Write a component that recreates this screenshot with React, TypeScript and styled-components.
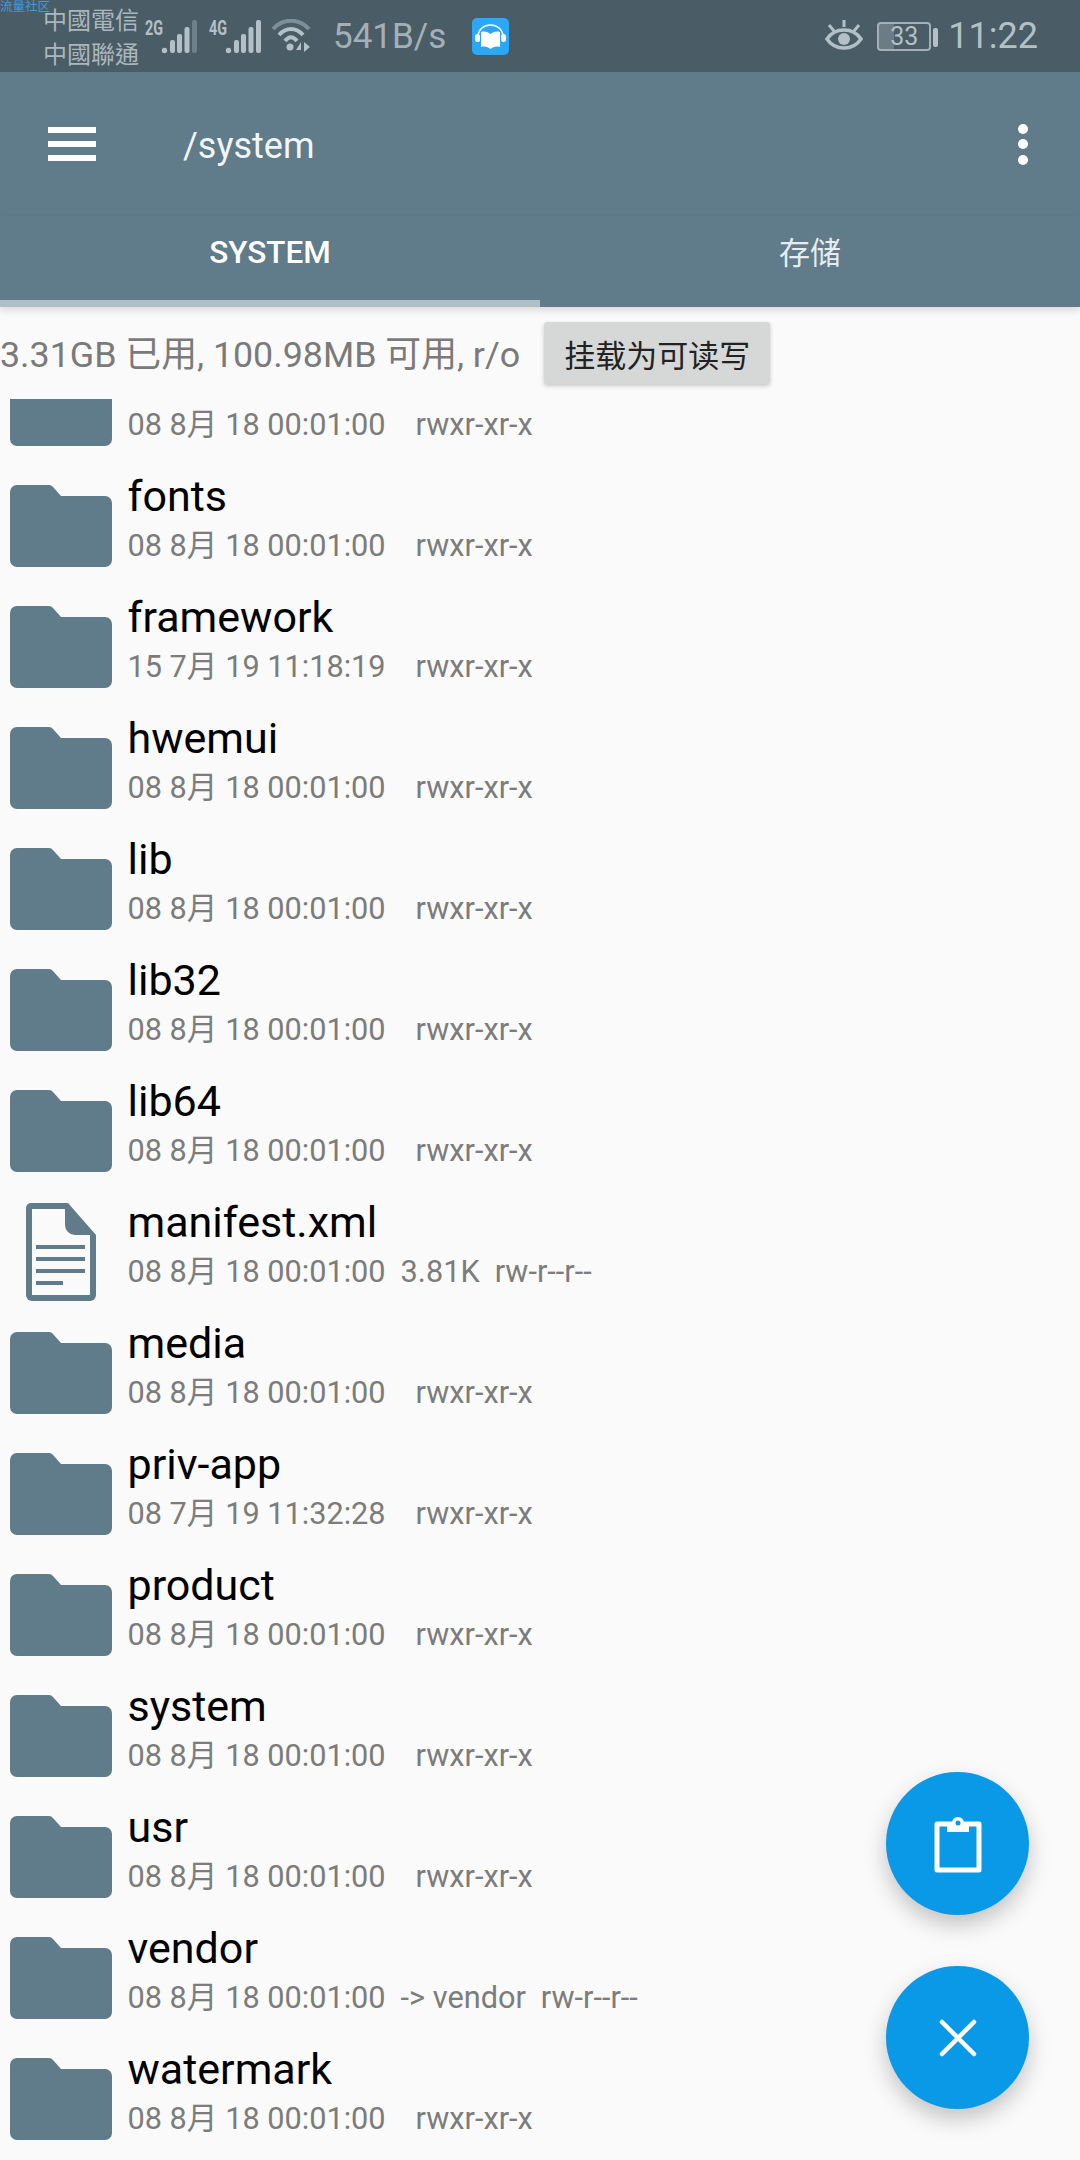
import React from "react";
import styled, { createGlobalStyle } from "styled-components";

const GlobalStyle = createGlobalStyle`
  html, body {
    margin: 0;
    padding: 0;
    background: #fafafa;
  }
  * {
    box-sizing: border-box;
  }
`;

const FONT = `Roboto, "Noto Sans CJK SC", sans-serif`;

const Screen = styled.div`
  position: relative;
  width: 1080px;
  height: 2160px;
  display: flex;
  flex-direction: column;
  overflow: hidden;
  background: #fafafa;
  font-family: ${FONT};
`;

const StatusBar = styled.div`
  position: relative;
  height: 72px;
  flex: none;
  display: flex;
  align-items: center;
  padding: 0 42px 0 43px;
  background: #4a5c66;
  color: #b4c0c7;
`;

const Watermark = styled.span`
  position: absolute;
  left: 0;
  top: 0;
  font-size: 12.5px;
  line-height: 14px;
  color: #3d9be0;
`;

const Carrier = styled.div`
  width: 100px;
  font-family: "Noto Sans CJK TC", sans-serif;
  font-size: 24px;
  line-height: 34px;
  color: #aab7be;
`;

const SignalBox = styled.svg`
  display: block;
  flex: none;
  margin-left: ${(props: { $gap: number }) => props.$gap}px;
`;

const Speed = styled.span`
  margin-left: 22px;
  font-size: 35px;
  color: #a3b0b8;
`;

const AppBadge = styled.svg`
  display: block;
  margin-left: 26px;
`;

const Spacer = styled.div`
  flex: 1;
`;

const BatteryBox = styled.div`
  position: relative;
  width: 54px;
  height: 29px;
  margin-left: 14px;
  border: 2px solid #a3b0b8;
  border-radius: 4px;
  display: flex;
  align-items: center;
  justify-content: center;
  font-size: 25px;
  color: #b4c0c7;
  background: linear-gradient(to right, #6c7c85 0 30%, transparent 30%);

  &::after {
    content: "";
    position: absolute;
    right: -9px;
    top: 4px;
    width: 5px;
    height: 19px;
    border-radius: 2px;
    background: #b4c0c7;
  }
`;

const Clock = styled.span`
  margin-left: 17px;
  font-size: 36px;
  color: #b4c0c7;
`;

const Toolbar = styled.div`
  height: 144px;
  flex: none;
  display: flex;
  align-items: center;
  padding: 0 0 0 48px;
  background: #607b8a;
  color: #fff;
`;

const MenuBars = styled.div`
  width: 48px;
  display: flex;
  flex-direction: column;
  gap: 8px;

  span {
    display: block;
    height: 6px;
    background: #fff;
  }
`;

const Path = styled.span`
  margin-left: 87px;
  padding-top: 3px;
  flex: 1;
  font-size: 36px;
  color: #f2f5f6;
`;

const MoreDots = styled.div`
  width: 10px;
  margin-right: 52px;
  display: flex;
  flex-direction: column;
  gap: 5.5px;

  span {
    display: block;
    width: 10px;
    height: 10px;
    border-radius: 50%;
    background: #fff;
  }
`;

const Tabs = styled.div`
  position: relative;
  z-index: 1;
  height: 91px;
  flex: none;
  display: flex;
  background: #607b8a;
  box-shadow: 0 3px 8px rgba(0, 0, 0, 0.14);
`;

const Tab = styled.div<{ $active?: boolean }>`
  flex: 1;
  display: flex;
  align-items: center;
  justify-content: center;
  padding-bottom: ${(props) => (props.$active ? 12 : 15)}px;
  font-size: ${(props) => (props.$active ? 31.5 : 31)}px;
  font-weight: ${(props) => (props.$active ? 500 : 400)};
  color: ${(props) => (props.$active ? "#fff" : "#e6ecef")};
  border-bottom: 7px solid ${(props) => (props.$active ? "#b0bec5" : "transparent")};
`;

const InfoRow = styled.div`
  height: 92px;
  flex: none;
  display: flex;
  align-items: flex-start;
  padding-top: 15px;
`;

const InfoText = styled.span`
  height: 62px;
  line-height: 66px;
  font-size: 35.8px;
  color: #7a7a7a;
  white-space: nowrap;
`;

const MountButton = styled.div`
  width: 226px;
  height: 62px;
  margin-left: 24px;
  display: flex;
  align-items: center;
  justify-content: center;
  border-radius: 3px;
  background: #d6d7d7;
  box-shadow: 0 2px 4px rgba(0, 0, 0, 0.2);
  font-size: 31px;
  color: #222;
`;

const List = styled.div`
  flex: 1;
  overflow: hidden;
`;

const ScrolledContent = styled.div`
  margin-top: -55px;
`;

const Row = styled.div`
  height: 121px;
  display: flex;
  padding-left: 10px;
`;

const IconSlot = styled.div`
  width: 102px;
  flex: none;
  padding-top: 1px;
  display: flex;
  align-items: center;
  justify-content: center;
`;

const Texts = styled.div`
  margin-left: 15.5px;
  padding-top: 6.5px;
  display: flex;
  flex-direction: column;
`;

const Name = styled.div`
  font-size: 43px;
  line-height: 48px;
  color: #000;
`;

const Meta = styled.div`
  margin-top: 6px;
  display: flex;
  font-size: 30.7px;
  line-height: 40px;
  color: #7c7c7c;
  white-space: nowrap;
`;

const Extra = styled.span`
  margin-left: 15px;
`;

const Perm = styled.span<{ $wide: boolean }>`
  margin-left: ${(props) => (props.$wide ? 30 : 15)}px;
`;

const Fab = styled.div<{ $top: number }>`
  position: absolute;
  left: 886px;
  top: ${(props) => props.$top}px;
  width: 143px;
  height: 143px;
  display: flex;
  align-items: center;
  justify-content: center;
  border-radius: 50%;
  background: #0a99e6;
  box-shadow: 0 10px 22px rgba(0, 0, 0, 0.22);
`;

const FolderIcon = () => (
  <svg width="102" height="82" viewBox="0 0 102 82">
    <path
      d="M7 0H39a5 5 0 0 1 4 2L51 11H95a7 7 0 0 1 7 7V75a7 7 0 0 1-7 7H7a7 7 0 0 1-7-7V7a7 7 0 0 1 7-7Z"
      fill="#607b8a"
    />
  </svg>
);

const FileIcon = () => (
  <svg width="70" height="98" viewBox="0 0 70 98">
    <path
      d="M5 0H42L70 32V92a6 6 0 0 1-6 6H6a6 6 0 0 1-6-6V5a5 5 0 0 1 5-5Z"
      fill="#607b8a"
    />
    <path d="M6 6H39V22a10 10 0 0 0 10 10H64V92H6Z" fill="#fafafa" />
    <path d="M10 44H59M10 56H59M10 68H59M10 80H37" stroke="#607b8a" strokeWidth="4" />
  </svg>
);

const Signal = ({ label, gap, lastDim }: { label: string; gap: number; lastDim?: boolean }) => (
  <SignalBox $gap={gap} width="53" height="38" viewBox="0 0 53 38">
    <text x="0" y="18" fontSize="21" fontWeight="700" fill="#b4c0c7" fontFamily="Roboto" textLength="18" lengthAdjust="spacingAndGlyphs">
      {label}
    </text>
    <circle cx="19.5" cy="33.5" r="2.7" fill="#b4c0c7" />
    <rect x="25" y="23" width="5" height="13" rx="2" fill="#b4c0c7" />
    <rect x="32" y="17" width="5" height="19" rx="2" fill="#b4c0c7" />
    <rect x="39.5" y="10" width="5" height="26" rx="2" fill="#b4c0c7" />
    <rect x="47" y="3" width="5" height="33" rx="2" fill={lastDim ? "#6f8089" : "#b4c0c7"} />
  </SignalBox>
);

const Wifi = () => (
  <SignalBox $gap={9} width="40" height="34" viewBox="0 0 40 34">
    <path d="M2 10C12 -1 28 -1 38 10" stroke="#7f8f98" strokeWidth="4" fill="none" />
    <path d="M8 16C15 8 25 8 32 16" stroke="#b4c0c7" strokeWidth="4" fill="none" />
    <path d="M14 22C18 17 22 17 26 22" stroke="#b4c0c7" strokeWidth="4" fill="none" />
    <circle cx="19" cy="28" r="3.5" fill="#b4c0c7" />
    <path d="M30 23L25 31H30ZM33 23L39 28L33 33Z" fill="#b4c0c7" />
  </SignalBox>
);

const Eye = () => (
  <svg width="38" height="32" viewBox="0 0 38 32">
    <path d="M2 19C10 7 28 7 36 19C28 31 10 31 2 19Z" fill="none" stroke="#b4c0c7" strokeWidth="3.5" />
    <circle cx="19" cy="19" r="6" fill="#b4c0c7" />
    <path d="M19 0V7M4 5L9 11M34 5L29 11" stroke="#b4c0c7" strokeWidth="3" />
  </svg>
);

const files = [
  { name: "", date: "08 8月 18 00:01:00", perm: "rwxr-xr-x" },
  { name: "fonts", date: "08 8月 18 00:01:00", perm: "rwxr-xr-x" },
  { name: "framework", date: "15 7月 19 11:18:19", perm: "rwxr-xr-x" },
  { name: "hwemui", date: "08 8月 18 00:01:00", perm: "rwxr-xr-x" },
  { name: "lib", date: "08 8月 18 00:01:00", perm: "rwxr-xr-x" },
  { name: "lib32", date: "08 8月 18 00:01:00", perm: "rwxr-xr-x" },
  { name: "lib64", date: "08 8月 18 00:01:00", perm: "rwxr-xr-x" },
  { name: "manifest.xml", date: "08 8月 18 00:01:00", extra: "3.81K", perm: "rw-r--r--", file: true },
  { name: "media", date: "08 8月 18 00:01:00", perm: "rwxr-xr-x" },
  { name: "priv-app", date: "08 7月 19 11:32:28", perm: "rwxr-xr-x" },
  { name: "product", date: "08 8月 18 00:01:00", perm: "rwxr-xr-x" },
  { name: "system", date: "08 8月 18 00:01:00", perm: "rwxr-xr-x" },
  { name: "usr", date: "08 8月 18 00:01:00", perm: "rwxr-xr-x" },
  { name: "vendor", date: "08 8月 18 00:01:00", extra: "-> vendor", perm: "rw-r--r--" },
  { name: "watermark", date: "08 8月 18 00:01:00", perm: "rwxr-xr-x" },
];

export default function App() {
  return (
    <Screen>
      <GlobalStyle />
      <StatusBar>
        <Watermark>流量社区</Watermark>
        <Carrier>
          中國電信
          <br />
          中國聯通
        </Carrier>
        <Signal label="2G" gap={2} lastDim />
        <Signal label="4G" gap={11} />
        <Wifi />
        <Speed>541B/s</Speed>
        <AppBadge width="37" height="37" viewBox="0 0 37 37">
          <rect width="37" height="37" rx="5" fill="#2aa8f5" />
          <path d="M6 19C6 3 31 3 31 19" stroke="#fff" strokeWidth="1.5" fill="none" />
          <rect x="3" y="16" width="5" height="8" rx="2.5" fill="#fff" />
          <rect x="29" y="16" width="5" height="8" rx="2.5" fill="#fff" />
          <path d="M9 14C13 13 16 14 18.5 16C21 14 24 13 28 14V29C24 28 21 29 18.5 31C16 29 13 28 9 29Z" fill="#fff" />
        </AppBadge>
        <Spacer />
        <Eye />
        <BatteryBox>33</BatteryBox>
        <Clock>11:22</Clock>
      </StatusBar>
      <Toolbar>
        <MenuBars>
          <span />
          <span />
          <span />
        </MenuBars>
        <Path>/system</Path>
        <MoreDots>
          <span />
          <span />
          <span />
        </MoreDots>
      </Toolbar>
      <Tabs>
        <Tab $active>SYSTEM</Tab>
        <Tab>存储</Tab>
      </Tabs>
      <InfoRow>
        <InfoText>3.31GB 已用, 100.98MB 可用, r/o</InfoText>
        <MountButton>挂载为可读写</MountButton>
      </InfoRow>
      <List>
        <ScrolledContent>
          {files.map((item) => (
            <Row key={item.name || "clipped"}>
              <IconSlot>{item.file ? <FileIcon /> : <FolderIcon />}</IconSlot>
              <Texts>
                <Name>{item.name || "\u00a0"}</Name>
                <Meta>
                  <span>{item.date}</span>
                  {item.extra && <Extra>{item.extra}</Extra>}
                  <Perm $wide={!item.extra}>{item.perm}</Perm>
                </Meta>
              </Texts>
            </Row>
          ))}
        </ScrolledContent>
      </List>
      <Fab $top={1772}>
        <svg width="48" height="58" viewBox="0 0 48 58">
          <path d="M3 9H45V55H3Z" fill="none" stroke="#fff" strokeWidth="5" strokeLinejoin="round" />
          <path d="M13 8H18A6 6 0 0 1 30 8H35V17H13Z" fill="#fff" />
          <circle cx="24" cy="8" r="2.5" fill="#0a99e6" />
        </svg>
      </Fab>
      <Fab $top={1966}>
        <svg width="38" height="38" viewBox="0 0 38 38">
          <path d="M3 3L35 35M35 3L3 35" stroke="#fff" strokeWidth="4.5" strokeLinecap="round" />
        </svg>
      </Fab>
    </Screen>
  );
}
